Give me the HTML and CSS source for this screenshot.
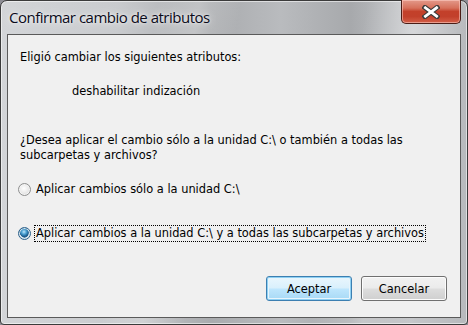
FILE: index.html
```html
<!DOCTYPE html>
<html lang="es">
<head>
    <meta charset="UTF-8">
    <title>Confirmar cambio de atributos</title>
    <link rel="stylesheet" href="styles.css">
</head>
<body>

    <div class="window">
        <div class="titlebar">
            <span class="title">Confirmar cambio de atributos</span>
            <button class="close-btn" aria-label="Cerrar">
                <svg width="18" height="14" viewBox="0 0 18 14">
                    <path d="M3 2.5 L15 11.5 M15 2.5 L3 11.5" stroke="#3a3a3a" stroke-width="5" stroke-linecap="square"/>
                    <path d="M3.4 2.8 L14.6 11.2 M14.6 2.8 L3.4 11.2" stroke="#ffffff" stroke-width="2.8" stroke-linecap="square"/>
                </svg>
            </button>
        </div>

        <div class="client">
            <p class="msg">Eligió cambiar los siguientes atributos:</p>
            <p class="attr">deshabilitar indización</p>
            <p class="question">¿Desea aplicar el cambio sólo a la unidad C:\ o también a todas las subcarpetas y archivos?</p>

            <div class="options">
                <label class="radio-row">
                    <span class="radio"></span>
                    <span class="radio-label">Aplicar cambios sólo a la unidad C:\</span>
                </label>
                <label class="radio-row">
                    <span class="radio checked"></span>
                    <span class="radio-label focused">Aplicar cambios a la unidad C:\ y a todas las subcarpetas y archivos</span>
                </label>
            </div>

            <div class="buttons">
                <button class="btn default">Aceptar</button>
                <button class="btn">Cancelar</button>
            </div>
        </div>
    </div>

</body>
</html>
```

FILE: styles.css
```css
/* --- Basic Setup --- */
body {
    margin: 0;
    width: 468px;
    height: 325px;
    overflow: hidden;
    background-color: #8d8d94;
}

/* --- Window frame (Aero glass, approximated) --- */
.window {
    width: 468px;
    height: 325px;
    box-sizing: border-box;
    border: 1px solid #3b3b3b;
    border-radius: 7px 7px 4px 4px;
    background:
        linear-gradient(100deg, rgba(255,255,255,0) 30%, rgba(255,255,255,0.25) 38%, rgba(255,255,255,0) 46%, rgba(255,255,255,0) 70%, rgba(255,255,255,0.3) 80%, rgba(255,255,255,0) 90%),
        linear-gradient(to right, #d3d5d8 0%, #c9cbce 25%, #a9abae 45%, #b9bbbe 60%, #a7a9ac 75%, #c4c6c9 88%, #b7b9bc 100%);
    box-shadow: inset 0 0 0 1px rgba(255, 255, 255, 0.55);
    display: flex;
    flex-direction: column;
}

.titlebar {
    height: 33px;
    display: flex;
    align-items: flex-start;
    justify-content: space-between;
    padding: 0 6px 0 8px;
}

.title {
    font-family: "Open Sans", "Noto Sans", sans-serif;
    font-size: 15px;
    color: #0b0b1a;
    margin-top: 6px;
    letter-spacing: -0.5px;
    text-shadow: 0 0 8px rgba(255, 255, 255, 0.9), 0 0 3px rgba(255, 255, 255, 0.8);
}

.close-btn {
    width: 60px;
    height: 24px;
    margin-top: -1px;
    padding: 0;
    border: 1px solid #4a1d16;
    border-top: none;
    border-radius: 0 0 5px 5px;
    background: linear-gradient(to bottom, #e3998a 0%, #d6705b 35%, #c3402a 50%, #c2402b 72%, #d35f48 100%);
    box-shadow: inset 0 0 0 1px rgba(255, 210, 200, 0.55);
    display: flex;
    align-items: center;
    justify-content: center;
}

/* --- Client area --- */
.client {
    flex: 1;
    margin: 0 6px 6px 6px;
    border: 1px solid #5a5a5a;
    background-color: #f0f0f0;
    padding: 15px 12px 0 12px;
    font-family: "DejaVu Sans", sans-serif;
    font-size: 11.4px;
    line-height: 15px;
    color: #000;
    display: flex;
    flex-direction: column;
}

.client p { margin: 0; }

.attr {
    margin-top: 19px !important;
    padding-left: 52px;
}

.question {
    margin-top: 34px !important;
    width: 425px;
}

/* --- Radio buttons --- */
.options {
    display: flex;
    flex-direction: column;
    gap: 27px;
    margin-top: 18px;
}

.radio-row {
    display: flex;
    align-items: center;
    gap: 3px;
    margin-left: -2px;
}

.radio {
    width: 11px;
    height: 11px;
    border-radius: 50%;
    border: 1px solid #8e8f8f;
    background: radial-gradient(circle at 45% 40%, #ffffff 0%, #ececec 45%, #cfcfcf 100%);
    box-shadow: inset 0 0 0 1px #f4f4f4;
    flex-shrink: 0;
}

.radio.checked {
    border-color: #2c628b;
    background:
        radial-gradient(circle at 45% 35%, #bfe6fb 0%, #4da3d4 25%, #1a5b8d 50%, rgba(26,91,141,0) 52%),
        radial-gradient(circle, #1d4f74 0%, #2a6593 50%, #e6eef3 56%, #ffffff 100%);
    box-shadow: inset 0 0 0 1px #d8e4ec;
}

.radio-label {
    padding: 0 1px;
    border: 1px solid transparent;
}

.radio-label.focused {
    border: 1px dotted #000;
}

/* --- Buttons --- */
.buttons {
    margin-top: auto;
    margin-bottom: 16px;
    display: flex;
    justify-content: flex-end;
    gap: 9px;
    margin-right: 1px;
}

.btn {
    width: 86px;
    height: 25px;
    font-family: "DejaVu Sans", sans-serif;
    font-size: 11.4px;
    color: #000;
    border: 1px solid #707070;
    border-radius: 3px;
    background: linear-gradient(to bottom, #f2f2f2 0%, #ebebeb 48%, #dddddd 52%, #cfcfcf 100%);
    box-shadow: inset 0 0 0 1px #fcfcfc;
    padding: 0;
}

.btn.default {
    border-color: #3c7fb1;
    background: linear-gradient(to bottom, #eaf6fd 0%, #d9f0fc 48%, #bee6fd 52%, #a7d9f5 100%);
    box-shadow: inset 0 0 0 1px #8ed0f3, inset 0 0 0 2px #e8f5fc;
}
```
